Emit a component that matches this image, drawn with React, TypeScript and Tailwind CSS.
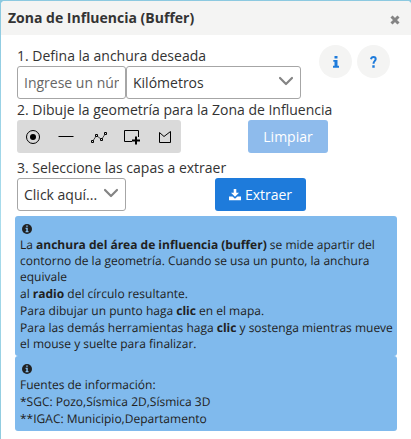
import React from "react";

function Chevron() {
  return (
    <svg
      className="pointer-events-none absolute top-2 right-[7px] h-4 w-4"
      viewBox="0 0 16 16"
      fill="none"
      stroke="#848484"
      strokeWidth="2.2"
      strokeLinecap="round"
      strokeLinejoin="round"
      aria-hidden="true"
    >
      <path d="M2 4L8 10L14 4" />
    </svg>
  );
}

function InfoIcon() {
  return (
    <svg className="h-[10px] w-[10px]" viewBox="0 0 10 10" aria-hidden="true">
      <circle cx="5" cy="5" r="5" fill="#212121" />
      <path d="M4.2 1.4h1.6v1.4H4.2zM3.6 3.8h2.2v3.2h.7v1.2H3.6V7h.7V4.9h-.7z" fill="#80baed" />
    </svg>
  );
}

function Note({ children }: { children: React.ReactNode }) {
  return (
    <div className="flex flex-col gap-px rounded-[3px] bg-[#80baed] pt-2 pr-[2px] pb-1 pl-[5px] text-xs leading-4 text-[#212121] [text-rendering:geometricPrecision]">
      <div className="pb-[2px] pl-[2px]">
        <InfoIcon />
      </div>
      {children}
    </div>
  );
}

const tools = [
  {
    name: "Punto",
    icon: (
      <>
        <circle cx="8" cy="8" r="6.5" fill="none" stroke="#000" />
        <circle cx="8" cy="8" r="3" fill="#000" />
      </>
    ),
  },
  { name: "Línea", icon: <path d="M0.5 7.5H15.5" stroke="#000" /> },
  {
    name: "Polilínea",
    icon: (
      <>
        <path d="M1.5 12.5L5.5 6.5L10.5 10.5L14.5 4.5" fill="none" stroke="#444" />
        <path
          d="M.5 11.5h2v2h-2zM4.5 5.5h2v2h-2zM9.5 9.5h2v2h-2zM13.5 3.5h2v2h-2z"
          fill="#dadada"
          stroke="#000"
        />
      </>
    ),
  },
  {
    name: "Rectángulo",
    icon: (
      <>
        <path d="M8 12.5H.5V1.5H14.5V8" fill="none" stroke="#000" />
        <path d="M12 7.5V15.5M8 11.5H16" stroke="#000" strokeWidth="2" />
      </>
    ),
  },
  {
    name: "Polígono",
    icon: <path d="M2.5 3.5L7 7.5L13.5 2.5V13.5H2.5Z" fill="none" stroke="#000" />,
  },
];

export default function App() {
  return (
    <div className="bg-linear-to-b from-[#8cc9e0] via-[#a9dcec] to-[#8fcbdf] pt-px pl-px font-['Open_Sans','Noto_Sans',sans-serif] text-sm text-[#333]">
      <section className="overflow-hidden rounded-t bg-white">
        <header className="flex h-[34px] items-center justify-between bg-[#f4f4f3] pr-[11px] pl-[7px]">
          <h1 className="font-bold">Zona de Influencia (Buffer)</h1>
          <button type="button" aria-label="Cerrar" className="pt-1">
            <svg className="h-[10px] w-[10px]" viewBox="0 0 10 10" aria-hidden="true">
              <path d="M1.5 1.5L8.5 8.5M8.5 1.5L1.5 8.5" stroke="#848484" strokeWidth="3" />
            </svg>
          </button>
        </header>

        <div className="px-[14px] pt-[10px] pb-3">
          <div className="pl-[2px]">
            <div className="flex gap-[18px]">
              <div>
                <label htmlFor="anchura" className="block leading-[21px]">
                  1. Defina la anchura deseada
                </label>
                <div className="flex">
                  <input
                    id="anchura"
                    type="text"
                    placeholder="Ingrese un número"
                    className="h-[33px] w-[109px] rounded-[3px] border border-[#a6a6a6] bg-white px-[6px] placeholder:text-[#666]"
                  />
                  <div className="relative">
                    <select
                      aria-label="Unidad"
                      className="h-[33px] w-[175px] appearance-none rounded-[3px] border border-[#a6a6a6] bg-white px-[6px]"
                    >
                      <option>Kilómetros</option>
                    </select>
                    <Chevron />
                  </div>
                </div>
              </div>
              <div className="flex gap-[5px]">
                <button
                  type="button"
                  aria-label="Información"
                  className="flex h-[33px] w-[33px] items-center justify-center rounded-full bg-[#f4f4f3]"
                >
                  <svg className="h-3 w-[6px]" viewBox="0 0 6 12" fill="#1e7bdb" aria-hidden="true">
                    <path d="M1.5 0H4.5V2.5H1.5ZM0.3 4H4.5V9.8H6V11.7H0V9.8H1.5V5.8H0.3Z" />
                  </svg>
                </button>
                <button
                  type="button"
                  aria-label="Ayuda"
                  className="flex h-[33px] w-[33px] items-center justify-center rounded-full bg-[#f4f4f3]"
                >
                  <svg className="h-3 w-[7px]" viewBox="0 0 7 12" fill="none" aria-hidden="true">
                    <path
                      d="M1 3.2C1.3 1.6 2.4 1.1 3.5 1.1C4.8 1.1 5.7 1.9 5.7 3.1C5.7 4.9 3.5 5 3.5 7.8"
                      stroke="#1e7bdb"
                      strokeWidth="2"
                    />
                    <path d="M2.3 9.3H4.7V11.7H2.3Z" fill="#1e7bdb" />
                  </svg>
                </button>
              </div>
            </div>

            <h2 className="leading-[21px]">2. Dibuje la geometría para la Zona de Influencia</h2>
            <div className="flex gap-[67px]">
              <div className="flex h-[33px] w-[164px] rounded-[3px] bg-[#dadada]">
                {tools.map((tool) => (
                  <button
                    key={tool.name}
                    type="button"
                    aria-label={tool.name}
                    className="flex flex-1 items-center justify-center"
                  >
                    <svg className="h-4 w-4" viewBox="0 0 16 16" aria-hidden="true">
                      {tool.icon}
                    </svg>
                  </button>
                ))}
              </div>
              <button
                type="button"
                disabled
                className="h-[33px] w-20 rounded-[3px] bg-[#8ebbec] font-medium text-white"
              >
                Limpiar
              </button>
            </div>

            <label htmlFor="capas" className="mt-1 block leading-[21px]">
              3. Seleccione las capas a extraer
            </label>
            <div className="flex gap-[89px]">
              <div className="relative">
                <select
                  id="capas"
                  className="h-[33px] w-[109px] appearance-none rounded-[3px] border border-[#a6a6a6] bg-white px-[6px]"
                >
                  <option>Click aquí...</option>
                </select>
                <Chevron />
              </div>
              <button
                type="button"
                className="flex h-[33px] w-[91px] items-center justify-center gap-1 rounded-[3px] bg-[#1e7bdb] font-medium text-white"
              >
                <svg className="h-3 w-3" viewBox="0 0 12 12" fill="#fff" aria-hidden="true">
                  <path d="M4.7 0H7.3V3.8H10L6 7.8L2 3.8H4.7Z" />
                  <path d="M0 7.5H3.5L6 9.8L8.5 7.5H12V11.3H0Z" />
                </svg>
                Extraer
              </button>
            </div>
          </div>

          <div className="mt-[5px]">
            <Note>
              <p>
                La <b>anchura del área de influencia (buffer)</b> se mide apartir del contorno de la
                geometría. Cuando se usa un punto, la anchura equivale
              </p>
              <p>
                al <b>radio</b> del círculo resultante.
              </p>
              <p>
                Para dibujar un punto haga <b>clic</b> en el mapa.
              </p>
              <p>
                Para las demás herramientas haga <b>clic</b> y sostenga mientras mueve el mouse y
                suelte para finalizar.
              </p>
            </Note>
            <Note>
              <p>Fuentes de información:</p>
              <p>*SGC: Pozo,Sísmica 2D,Sísmica 3D</p>
              <p>**IGAC: Municipio,Departamento</p>
            </Note>
          </div>
        </div>
      </section>
    </div>
  );
}
